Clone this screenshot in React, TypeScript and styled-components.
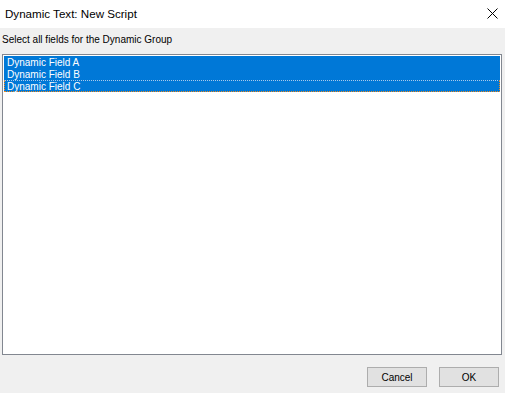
import styled, { createGlobalStyle } from "styled-components";

const GlobalStyle = createGlobalStyle`
  html, body {
    margin: 0;
    padding: 0;
    background: #f0f0f0;
  }
  * {
    box-sizing: border-box;
  }
`;

const Dialog = styled.div`
  width: 505px;
  height: 393px;
  display: flex;
  flex-direction: column;
  background: #f0f0f0;
  font-family: "Liberation Sans", Arial, sans-serif;
  color: #000;
  overflow: hidden;
`;

const TitleBar = styled.div`
  height: 28px;
  flex: none;
  display: flex;
  align-items: center;
  justify-content: space-between;
  background: #ffffff;
  padding: 0 7px 2px 5px;
`;

const Title = styled.span`
  font-size: 11.6px;
  color: #000;
`;

const CloseButton = styled.button`
  width: 12px;
  height: 12px;
  padding: 0;
  border: none;
  background: transparent;
  display: flex;
  align-items: center;
  justify-content: center;
`;

const Body = styled.div`
  flex: 1;
  display: flex;
  flex-direction: column;
  padding: 6px 3px 6px 2px;
  min-height: 0;
`;

const Prompt = styled.div`
  font-size: 10px;
  line-height: 12px;
  height: 12px;
  margin: 0 0 8px 0;
`;

const ListBox = styled.div`
  height: 301px;
  flex: none;
  border: 1px solid #828790;
  background: #ffffff;
  padding: 1px;
  display: flex;
  flex-direction: column;
`;

const Item = styled.div<{ $selected: boolean; $focused: boolean }>`
  height: 12px;
  line-height: 11px;
  font-size: 10px;
  padding-left: 2px;
  white-space: nowrap;
  color: ${({ $selected }) => ($selected ? "#ffffff" : "#000000")};
  background: ${({ $selected }) => ($selected ? "#0078d7" : "transparent")};
  border: 1px dotted ${({ $focused }) => ($focused ? "#f08a1c" : "transparent")};
  border-top-color: ${({ $focused }) => ($focused ? "#a9c9ea" : "transparent")};
`;

const Footer = styled.div`
  margin-top: auto;
  display: flex;
  justify-content: flex-end;
  gap: 12px;
  padding-right: 3px;
`;

const Button = styled.button`
  width: 60px;
  height: 20px;
  padding: 0;
  background: #e1e1e1;
  border: 1px solid #adadad;
  font-family: "Liberation Sans", Arial, sans-serif;
  font-size: 10px;
  color: #000;
`;

const fields = ["Dynamic Field A", "Dynamic Field B", "Dynamic Field C"];

export default function App() {
  return (
    <>
      <GlobalStyle />
      <Dialog>
        <TitleBar>
          <Title>Dynamic Text: New Script</Title>
          <CloseButton aria-label="Close">
            <svg width="11" height="11" viewBox="0 0 11 11">
              <path d="M0.5 0.5 L10.5 10.5 M10.5 0.5 L0.5 10.5" stroke="#000" strokeWidth="1" />
            </svg>
          </CloseButton>
        </TitleBar>
        <Body>
          <Prompt>Select all fields for the Dynamic Group</Prompt>
          <ListBox>
            {fields.map((f, i) => (
              <Item key={f} $selected $focused={i === fields.length - 1}>
                {f}
              </Item>
            ))}
          </ListBox>
          <Footer>
            <Button>Cancel</Button>
            <Button>OK</Button>
          </Footer>
        </Body>
      </Dialog>
    </>
  );
}
